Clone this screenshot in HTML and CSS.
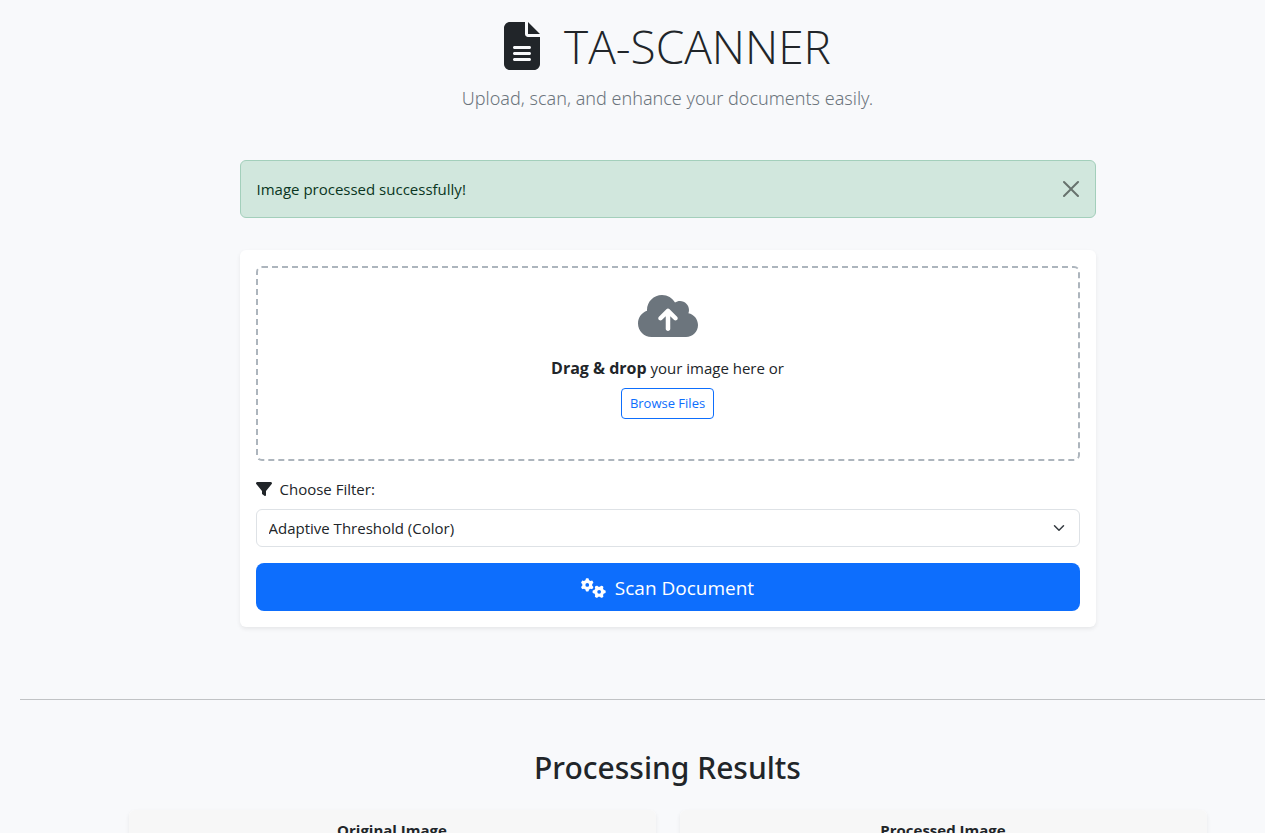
FILE: index.html
```html
<!DOCTYPE html>
<html lang="en">
<head>
<meta charset="utf-8">
<meta name="viewport" content="width=device-width, initial-scale=1">
<title>TA-SCANNER</title>
<link rel="stylesheet" href="styles.css">
</head>
<body>
<div class="page">
  <header class="header">
    <h1 class="title">
      <svg class="title-icon" viewBox="0 0 384 512" aria-hidden="true"><path d="M64 0C28.7 0 0 28.7 0 64V448c0 35.3 28.7 64 64 64H320c35.3 0 64-28.7 64-64V160H256c-17.7 0-32-14.3-32-32V0H64zM256 0V128H384L256 0zM112 256H272c8.800 0 16 7.200 16 16s-7.200 16-16 16H112c-8.800 0-16-7.200-16-16s7.200-16 16-16zm0 64H272c8.800 0 16 7.200 16 16s-7.200 16-16 16H112c-8.800 0-16-7.200-16-16s7.200-16 16-16zm0 64H272c8.800 0 16 7.200 16 16s-7.200 16-16 16H112c-8.800 0-16-7.200-16-16s7.200-16 16-16z"/></svg>
      <span>TA-SCANNER</span>
    </h1>
    <p class="lead">Upload, scan, and enhance your documents easily.</p>
  </header>

  <main>
    <div class="narrow">
      <div class="alert" role="alert">
        <span>Image processed successfully!</span>
        <button class="close" type="button" aria-label="Close">
          <svg viewBox="0 0 16 16" aria-hidden="true"><path d="M.293.293a1 1 0 0 1 1.414 0L8 6.586 14.293.293a1 1 0 1 1 1.414 1.414L9.414 8l6.293 6.293a1 1 0 0 1-1.414 1.414L8 9.414l-6.293 6.293a1 1 0 0 1-1.414-1.414L6.586 8 .293 1.707a1 1 0 0 1 0-1.414z"/></svg>
        </button>
      </div>

      <form class="card scan-form">
        <div class="dropzone">
          <svg class="cloud" viewBox="0 0 640 512" aria-hidden="true"><path d="M144 480C64.500 480 0 415.500 0 336c0-62.800 40.200-116.200 96.200-135.900c-.1-2.700-.2-5.400-.2-8.100c0-88.400 71.600-160 160-160c59.300 0 111 32.200 138.700 80.200C409.900 102 428.300 96 448 96c53 0 96 43 96 96c0 12.200-2.300 23.800-6.400 34.600C596 238.400 640 290.100 640 352c0 70.700-57.300 128-128 128H144zm79-217c-9.400 9.400-9.400 24.600 0 33.900s24.600 9.400 33.900 0l39-39V392c0 13.300 10.700 24 24 24s24-10.700 24-24V257.900l39 39c9.400 9.400 24.600 9.400 33.900 0s9.400-24.600 0-33.900l-80-80c-9.400-9.400-24.600-9.400-33.900 0l-80 80z"/></svg>
          <p class="drop-text"><strong>Drag &amp; drop</strong> your image here or</p>
          <button class="browse" type="button">Browse Files</button>
        </div>

        <div class="field">
          <label class="field-label" for="filter">
            <svg class="filter-icon" viewBox="0 0 512 512" aria-hidden="true"><path d="M3.900 54.900C10.500 40.900 24.500 32 40 32H472c15.500 0 29.500 8.900 36.100 22.900s4.600 30.500-5.200 42.500L320 320.900V448c0 12.100-6.800 23.200-17.700 28.600s-23.800 4.300-33.500-3l-64-48c-8.100-6-12.800-15.500-12.800-25.600V320.900L9 97.300C-.7 85.400-2.800 68.800 3.900 54.900z"/></svg>
            Choose Filter:
          </label>
          <div class="select-wrap">
            <select class="select" id="filter">
              <option>Adaptive Threshold (Color)</option>
            </select>
            <svg class="chevron" viewBox="0 0 16 16" aria-hidden="true"><path d="m2 5 6 6 6-6"/></svg>
          </div>
        </div>

        <button class="submit" type="submit">
          <svg class="gears" viewBox="0 0 640 512" aria-hidden="true">
            <defs><path id="gear" fill-rule="evenodd" d="M308.500 135.300c7.100-6.300 9.900-16.200 6.200-25c-2.300-5.300-4.800-10.500-7.600-15.500L304 89.400c-3-5-6.300-9.900-9.800-14.600c-5.700-7.600-15.700-10.100-24.700-7.100l-28.200 9.300c-10.700-8.800-23-16-36.200-20.900L199 27.100c-1.900-9.300-9.100-16.700-18.500-17.800C173.900 8.400 167.200 8 160.400 8h-.7c-6.800 0-13.500 .4-20.100 1.200c-9.400 1.100-16.600 8.600-18.500 17.800L115 56.100c-13.300 5-25.500 12.100-36.200 20.900L50.500 67.800c-9-3-19-.5-24.700 7.100c-3.500 4.700-6.800 9.600-9.900 14.600l-3 5.300c-2.800 5-5.300 10.200-7.600 15.600c-3.700 8.700-.9 18.600 6.200 25l22.200 19.800C32.600 161.900 32 168.900 32 176s.6 14.100 1.700 20.900L11.500 216.700c-7.100 6.300-9.900 16.200-6.200 25c2.300 5.300 4.800 10.500 7.600 15.600l3 5.200c3 5.100 6.300 9.900 9.900 14.600c5.700 7.600 15.700 10.100 24.700 7.100l28.200-9.300c10.700 8.800 23 16 36.200 20.900l6.100 29.100c1.900 9.300 9.100 16.700 18.500 17.800c6.700 .8 13.500 1.200 20.400 1.200s13.700-.4 20.400-1.200c9.400-1.100 16.600-8.600 18.500-17.800l6.100-29.100c13.300-5 25.500-12.100 36.200-20.900l28.200 9.300c9 3 19 .5 24.700-7.100c3.500-4.700 6.800-9.500 9.800-14.600l3.100-5.400c2.800-5 5.300-10.200 7.600-15.500c3.700-8.700 .9-18.600-6.200-25l-22.200-19.800c1.100-6.800 1.700-13.800 1.700-20.900s-.6-14.100-1.700-20.900l22.200-19.800zM112 176a48 48 0 1 1 96 0 48 48 0 1 1 -96 0z"/></defs>
            <use href="#gear"/>
            <use href="#gear" transform="translate(464 352) rotate(90) translate(-160 -176)"/>
          </svg>
          Scan Document
        </button>
      </form>
    </div>

    <hr class="divider">

    <section class="results">
      <h2 class="results-title">Processing Results</h2>
      <div class="results-grid">
        <article class="card result"><h3 class="result-head">Original Image</h3><div class="result-body"></div></article>
        <article class="card result"><h3 class="result-head">Processed Image</h3><div class="result-body"></div></article>
      </div>
    </section>
  </main>
</div>
</body>
</html>
```
FILE: styles.css
```css
* { box-sizing: border-box; }

html { overflow: hidden; }

body {
  margin: 0;
  background: #f8f9fb;
  color: #212529;
  font-family: "Segoe UI", "Open Sans", "Noto Sans", sans-serif;
  font-size: 15px;
  line-height: 24px;
}

h1, h2, h3, p { margin: 0; }

button, select { font: inherit; }

svg { display: block; fill: currentColor; overflow: visible; }

/* The page column runs past the right edge of the window. */
.page {
  margin: 0 -50px 0 20px;
  padding-top: 16px;
}

.header { text-align: center; }

.title {
  display: flex;
  justify-content: center;
  align-items: center;
  gap: 24px;
  font-size: 46px;
  font-weight: 300;
  line-height: 60px;
}

.title-icon { width: 36px; height: 48px; }

.lead {
  margin-top: 8px;
  color: #6c757d;
  font-family: "Segoe UI", "Noto Sans", "Open Sans", sans-serif;
  font-size: 18px;
  font-weight: 300;
  line-height: 28px;
}

.narrow {
  max-width: 856px;
  margin: 48px auto 0;
}

.alert {
  display: flex;
  justify-content: space-between;
  align-items: center;
  padding: 16px;
  border: 1px solid #a3cfbb;
  border-radius: 6px;
  background: #d1e7dd;
  color: #0a3622;
}

.close {
  padding: 0;
  border: 0;
  background: none;
  color: #000;
  opacity: .5;
}

.close svg { width: 16px; height: 16px; }

.card {
  border-radius: 6px;
  background: #fff;
  box-shadow: 0 2px 4px rgba(0, 0, 0, .075);
}

.scan-form {
  display: flex;
  flex-direction: column;
  gap: 16px;
  margin-top: 32px;
  padding: 16px;
}

.dropzone {
  display: flex;
  flex-direction: column;
  align-items: center;
  padding: 24px 24px 40px;
  border: 2px dashed #adb5bd;
  border-radius: 6px;
}

.cloud { width: 60px; height: 48px; color: #6c757d; }

.drop-text { margin: 16px 0 8px; }

.drop-text strong { font-size: 16px; }

.browse {
  padding: 4px 8px;
  border: 1px solid #0d6efd;
  border-radius: 4px;
  background: #fff;
  color: #0d6efd;
  font-size: 13px;
  line-height: 21px;
}

.field { display: grid; gap: 8px; }

.field-label { display: flex; align-items: center; gap: 8px; }

.filter-icon { width: 16px; height: 16px; }

.select-wrap { display: grid; align-items: center; }

.select, .chevron { grid-area: 1 / 1; }

.select {
  appearance: none;
  width: 100%;
  height: 38px;
  padding: 0 36px 0 12px;
  border: 1px solid #dee2e6;
  border-radius: 6px;
  background: #fff;
  color: inherit;
}

.chevron {
  justify-self: end;
  width: 12px;
  height: 12px;
  margin-right: 15px;
  fill: none;
  stroke: #343a40;
  stroke-width: 2;
  stroke-linecap: round;
  stroke-linejoin: round;
  pointer-events: none;
}

.submit {
  display: flex;
  justify-content: center;
  align-items: center;
  gap: 9px;
  padding: 10px 16px 8px;
  border: 0;
  border-radius: 8px;
  background: #0d6efd;
  color: #fff;
  font-size: 19px;
  line-height: 30px;
}

.gears { width: 25px; height: 20px; }

.divider {
  margin: 72px 0 48px;
  border: 0;
  border-top: 1px solid #c1c3c5;
}

.results {
  max-width: 1078px;
  margin: 0 auto;
}

.results-title {
  padding-top: 1px;
  font-family: "Segoe UI", "Noto Sans", "Open Sans", sans-serif;
  font-size: 30px;
  font-weight: 500;
  line-height: 38px;
  text-align: center;
}

.results-grid {
  display: grid;
  grid-template-columns: 1fr 1fr;
  gap: 24px;
  margin-top: 23px;
}

.result-head {
  padding: 8px 16px;
  border-bottom: 1px solid #dfdfdf;
  border-radius: 6px 6px 0 0;
  background: #f7f7f7;
  font-size: 15px;
  font-weight: 700;
  text-align: center;
}

.result-body { min-height: 240px; }
```
